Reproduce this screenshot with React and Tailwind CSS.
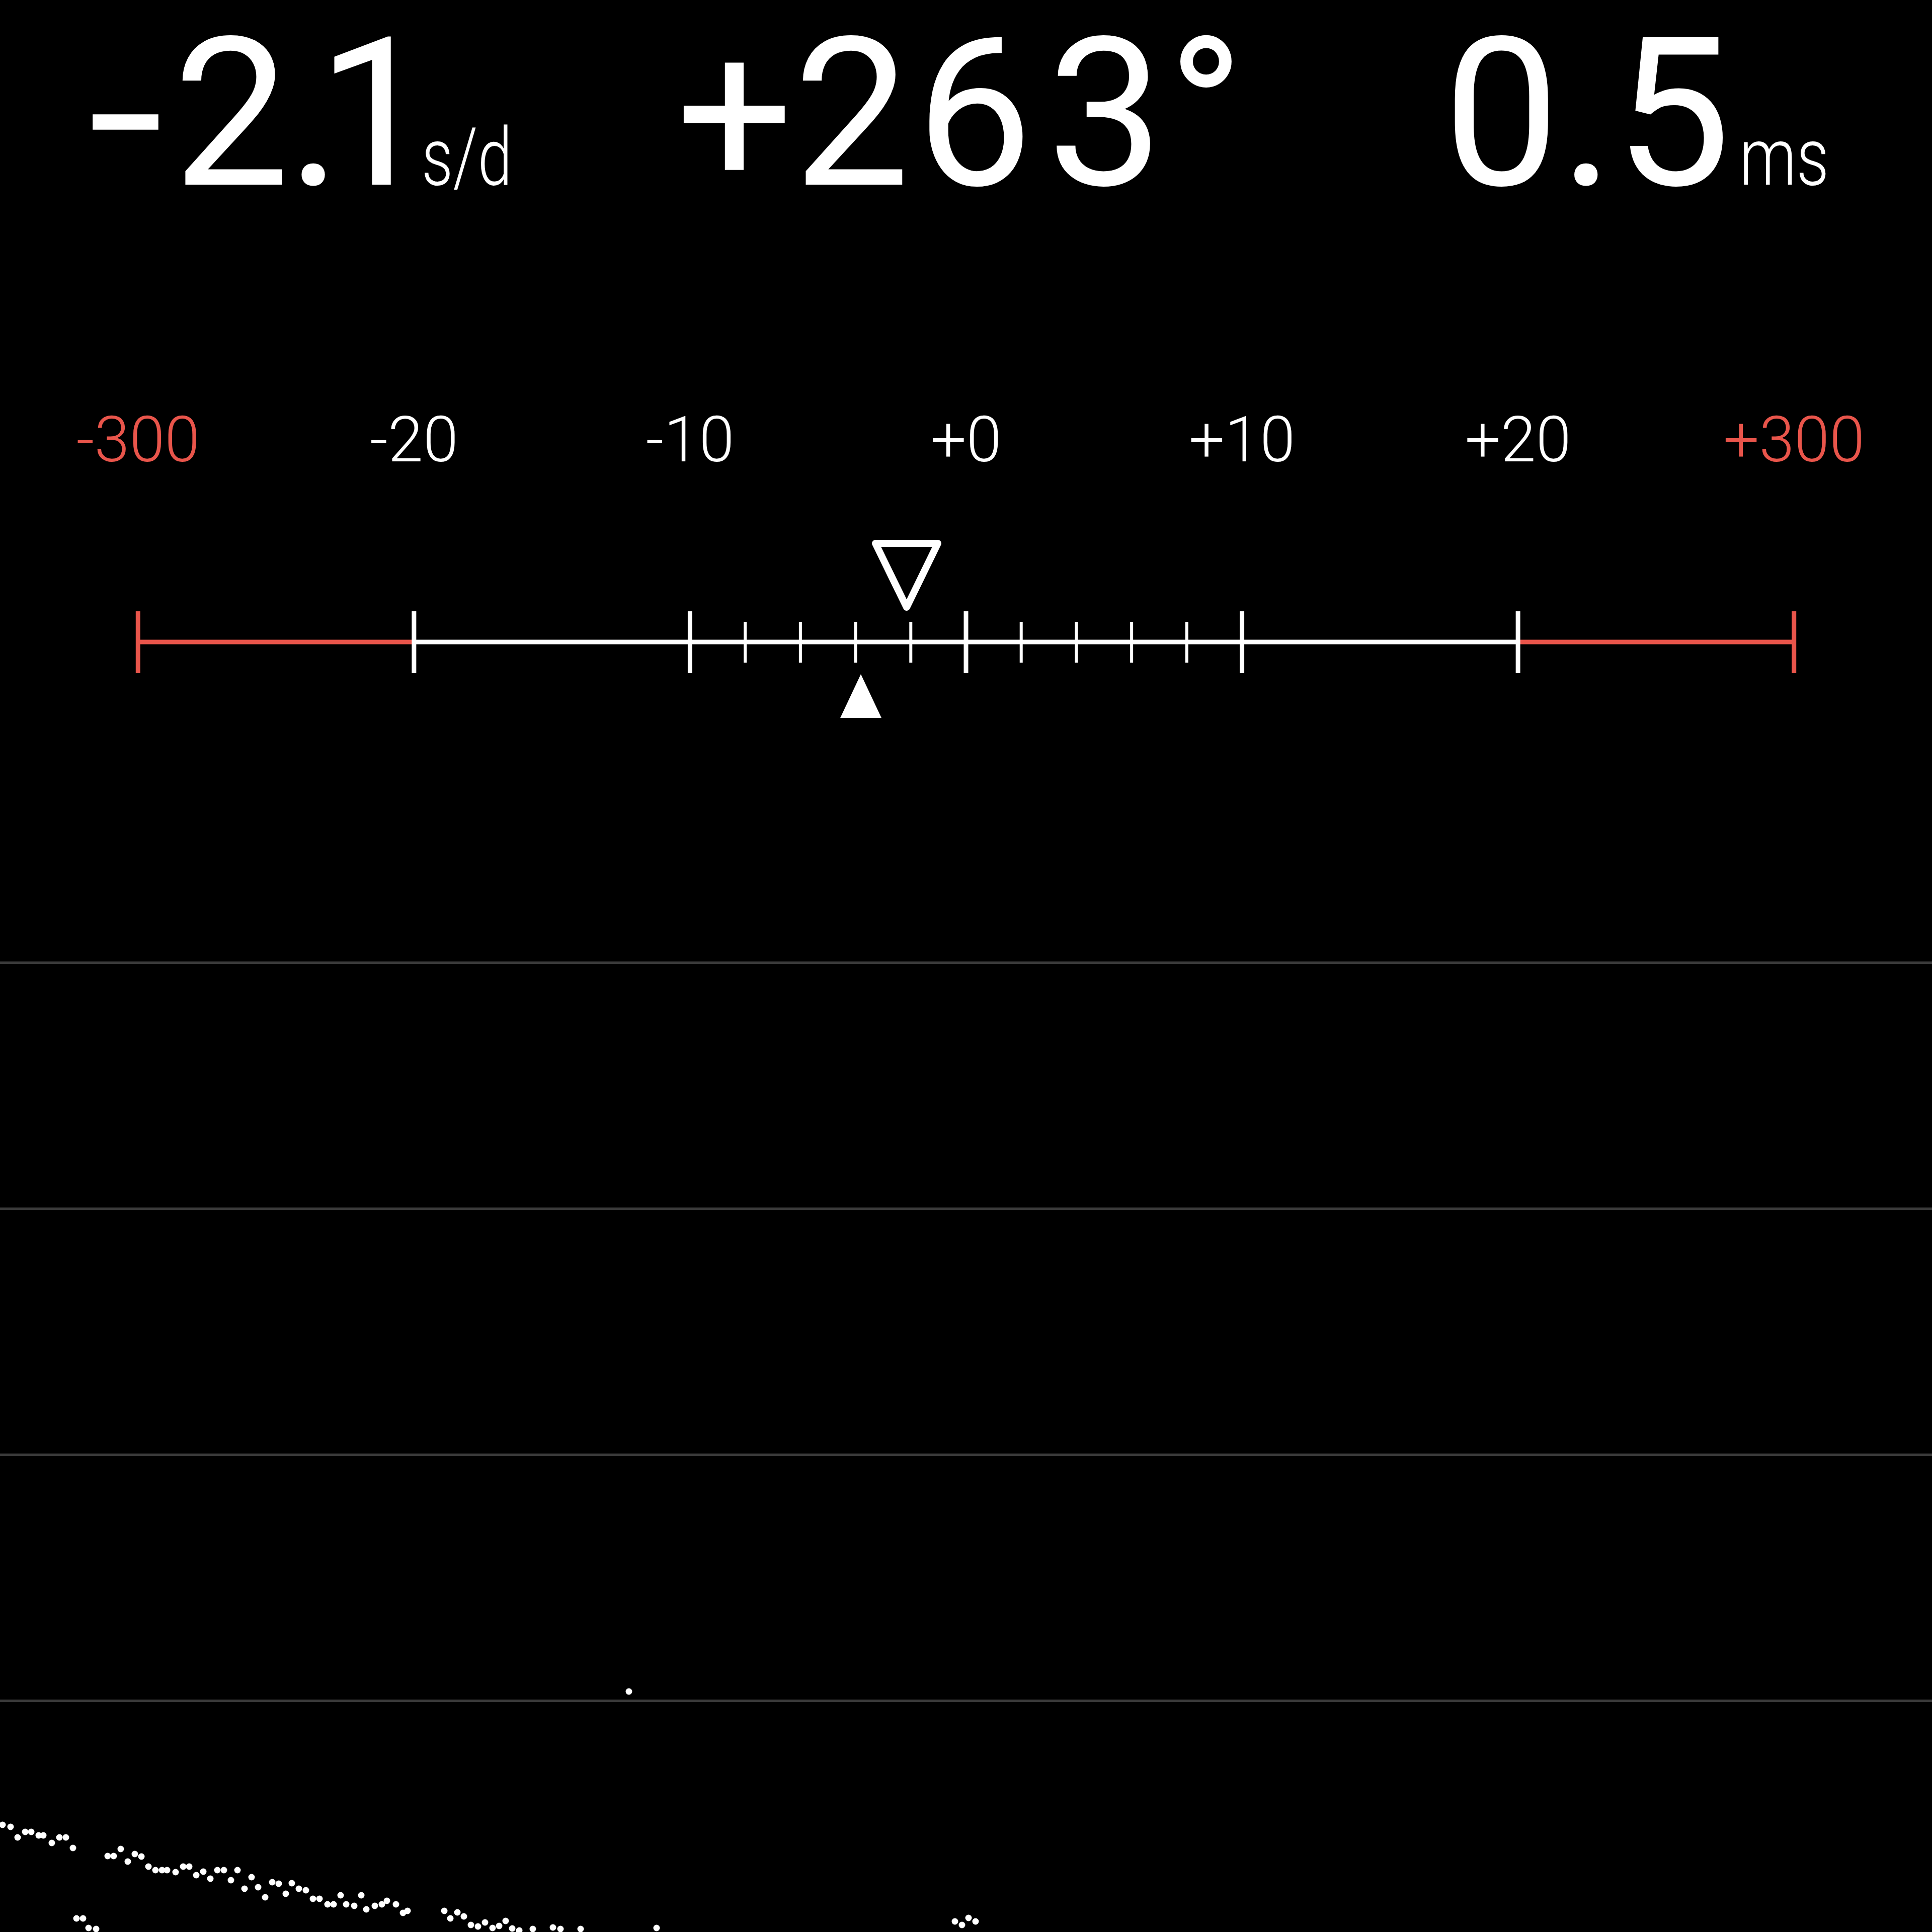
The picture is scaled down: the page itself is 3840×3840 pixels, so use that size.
import React from "react";

const RED = "#e9554b";
const COL = 3840 / 7;
const cx = (i) => COL / 2 + i * COL;

const labels = [
  { t: "-300", red: true },
  { t: "-20" },
  { t: "-10" },
  { t: "+0" },
  { t: "+10" },
  { t: "+20" },
  { t: "+300", red: true },
];

// scatter points, page coordinates
const dots = [
  [5, 3627], [21, 3631], [35, 3652], [50, 3641], [62, 3641], [77, 3648], [86, 3648],
  [103, 3663], [118, 3652], [131, 3652], [145, 3673], [214, 3689], [226, 3689],
  [240, 3675], [254, 3700], [268, 3685], [281, 3690], [295, 3710], [309, 3717],
  [322, 3717], [332, 3717], [349, 3721], [364, 3710], [376, 3710], [390, 3727],
  [404, 3720], [418, 3734], [432, 3717], [445, 3717], [459, 3737], [472, 3717],
  [486, 3754], [500, 3731], [513, 3751], [527, 3771], [541, 3741], [554, 3744],
  [568, 3764], [580, 3743], [594, 3754], [608, 3757], [622, 3774], [635, 3774],
  [651, 3785], [663, 3785], [677, 3767], [688, 3785], [704, 3788], [718, 3767],
  [728, 3795], [745, 3788], [759, 3785], [769, 3778], [787, 3785], [801, 3802],
  [810, 3798], [883, 3798], [895, 3813], [909, 3801], [922, 3809], [936, 3826],
  [950, 3829], [964, 3821], [979, 3832], [992, 3828], [152, 3813], [165, 3813],
  [176, 3832], [191, 3834], [1005, 3818], [1018, 3833], [1032, 3837], [1059, 3834],
  [1099, 3831], [1114, 3834], [1154, 3834], [1305, 3832], [1898, 3819], [1912, 3826],
  [1925, 3812], [1939, 3819], [1250, 3362],
];

const CHART_TOP = 1430;

const big = "text-[412px] leading-[1.2] font-['Roboto','Liberation_Sans',sans-serif]";
const unitCls =
  "inline-block text-[160px] leading-[1.2] font-light font-['Roboto','Liberation_Sans',sans-serif] origin-left";

function Ruler() {
  const y = 339;
  const minors = [];
  for (let k = 1; k < 10; k++) {
    if (k === 5) continue;
    minors.push(cx(2) + (k * COL) / 5);
  }
  return (
    <svg className="block w-[3840px] h-[493px]" viewBox="0 0 3840 493">
      <line x1={cx(0)} y1={y} x2={cx(1)} y2={y} stroke={RED} strokeWidth="9" />
      <line x1={cx(1)} y1={y} x2={cx(5)} y2={y} stroke="#fff" strokeWidth="9" />
      <line x1={cx(5)} y1={y} x2={cx(6)} y2={y} stroke={RED} strokeWidth="9" />
      {[0, 1, 2, 3, 4, 5, 6].map((i) => (
        <rect key={i} x={cx(i) - 4.5} y={278} width="9" height="123" fill={i === 0 || i === 6 ? RED : "#fff"} />
      ))}
      {minors.map((x) => (
        <rect key={x} x={x - 3} y={299} width="6" height="81" fill="#fff" />
      ))}
      {/* hollow marker */}
      <polygon
        points="1740,143 1864,143 1802,270"
        fill="none"
        stroke="#fff"
        strokeWidth="14"
        strokeLinejoin="round"
      />
      {/* filled marker */}
      <polygon points="1711,403 1752,490 1670,490" fill="#fff" />
    </svg>
  );
}

export default function App() {
  return (
    <div className="w-[3840px] h-[3840px] bg-black text-white overflow-hidden flex flex-col">
      {/* readouts */}
      <div className="h-[831px] -mt-[20px] flex items-baseline">
        <div className="ml-[174px] flex items-baseline">
          <span className={big}>
            <span className="inline-block scale-x-[1.33] origin-left">-</span>
            <span className="ml-[56px]">2</span>
            <span className="-ml-[5px] tracking-[-49px]">.</span>
            <span className="tracking-[-24px]">1</span>
          </span>
          <span className={`${unitCls} scale-x-[0.77]`}>s/d</span>
        </div>
        <div className="ml-[272px] flex items-baseline">
          <span className={big}>
            +2<span className="ml-[12px]">6</span>
            <span className="ml-[29px]">3</span>
            <span className="ml-[7px]">°</span>
          </span>
        </div>
        <div className="ml-[395px] flex items-baseline">
          <span className={big}>0.5</span>
          <span className={`${unitCls} scale-x-[0.8] ml-[17px]`}>ms</span>
        </div>
      </div>

      {/* scale labels */}
      <div className="grid grid-cols-7">
        {labels.map((l) => (
          <div
            key={l.t}
            className={`text-center text-[126px] leading-none font-light font-['Roboto','Liberation_Sans',sans-serif] ${
              l.red ? "text-[#e9554b]" : "text-white"
            }`}
          >
            {l.t}
          </div>
        ))}
      </div>

      <Ruler />

      {/* history chart */}
      <div className="relative flex-1">
        <div className="flex flex-col">
          <div className="mt-[481px] h-[5px] bg-[#3a3a3a]" />
          <div className="mt-[484px] h-[5px] bg-[#3a3a3a]" />
          <div className="mt-[484px] h-[5px] bg-[#3a3a3a]" />
          <div className="mt-[484px] h-[5px] bg-[#3a3a3a]" />
        </div>
        <svg className="absolute inset-0 w-full h-full" viewBox="0 0 3840 2410" preserveAspectRatio="none">
          {dots.map(([x, y], i) => (
            <circle key={i} cx={x} cy={y - CHART_TOP} r="6.5" fill="#fff" />
          ))}
        </svg>
      </div>
    </div>
  );
}
